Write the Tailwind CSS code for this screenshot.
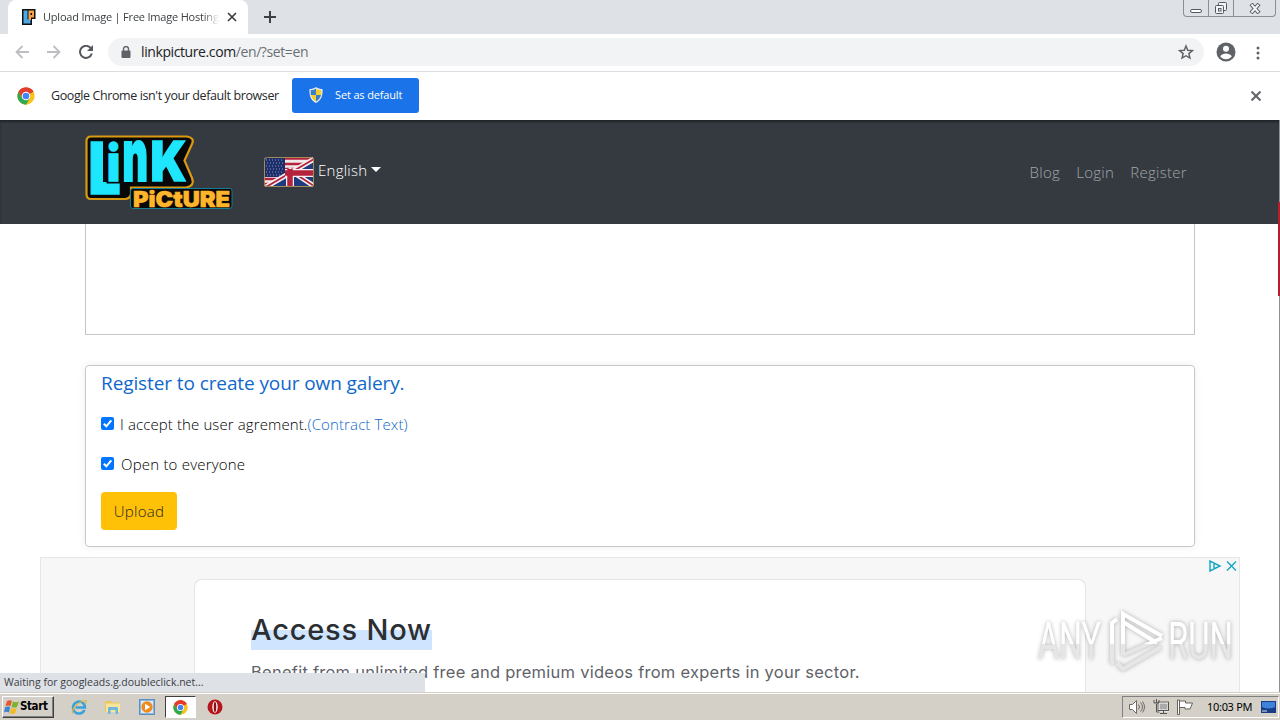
<!doctype html>
<html lang="en">
<head>
  <meta charset="UTF-8" />
  <meta name="viewport" content="width=device-width, initial-scale=1.0" />
  <title>Upload Image | Free Image Hosting</title>
  <script src="https://cdn.jsdelivr.net/npm/@tailwindcss/browser@4"></script>
</head>
<body class="relative flex h-[720px] w-[1280px] flex-col overflow-hidden bg-white font-['Open_Sans','Noto_Sans',sans-serif] text-black">

  <!-- Shared symbols -->
  <svg class="hidden">
    <symbol id="chrome" viewBox="0 0 48 48">
      <circle cx="24" cy="24" r="23" fill="#fbc116" />
      <path d="M24 24 4.1 12.5A23 23 0 0 1 43.9 12.5Z" fill="#e33b2e" />
      <path d="M4.1 12.5A23 23 0 0 0 24 47L34 29.8 14 29.8Z" fill="#2da94f" />
      <path d="M24 13H44.2A23 23 0 0 0 4.1 12.5L14 29.8Z" fill="#e33b2e" />
      <circle cx="24" cy="24" r="11.5" fill="#fff" />
      <circle cx="24" cy="24" r="8.8" fill="#4285f4" />
    </symbol>
  </svg>

  <!-- Tab strip -->
  <div class="flex h-[34px] shrink-0 bg-[#dee1e6]">
    <div class="ml-2 flex h-full w-[240px] items-center rounded-t-lg bg-white pl-3">
      <svg class="ml-px h-4 w-4" viewBox="0 0 16 16">
        <path d="M1 0H14.500V10H11V16H1Z" fill="#111" />
        <path d="M2.500 1.500H6.500V10.500H9.500V14.500H2.500Z" fill="#4aa8e8" />
        <path d="M7.500 1.500H13V8.500H10V11H7.500Z" fill="#f5a04a" />
        <path d="M9.500 4h1.500v2h-1.500z" fill="#111" />
      </svg>
      <div class="ml-[6px] w-[178px] overflow-hidden text-[11px] tracking-[-0.2px] whitespace-nowrap text-[#3c4043] [mask-image:linear-gradient(to_right,#000_160px,transparent_176px)]">Upload Image | Free Image Hosting |</div>
      <svg class="ml-[6px] h-[10px] w-[10px]" viewBox="0 0 10 10" stroke="#3c4043" stroke-width="1.700"><path d="M1 1l8 8M9 1l-8 8" /></svg>
    </div>
    <svg class="mt-[11px] ml-4 h-3 w-3" viewBox="0 0 12 12" stroke="#3c4043" stroke-width="2"><path d="M6 0v12M0 6h12" /></svg>
    <div class="mr-1 ml-auto flex h-[17px] rounded-b border border-t-0 border-[#8b8e94]">
      <div class="flex w-[25px] items-end justify-center border-r border-[#8b8e94] pb-[3px]"><div class="h-1 w-3 rounded-sm border border-[#55585e] bg-white"></div></div>
      <div class="flex w-[25px] items-center justify-center border-r border-[#8b8e94]">
        <svg class="h-3 w-3" viewBox="0 0 12 12" fill="#f2f3f5" stroke="#55585e"><rect x="3.500" y=".5" width="8" height="8" rx="1" /><rect x=".5" y="3.500" width="8" height="8" rx="1" /><rect x="3.500" y="6.500" width="2.500" height="2.500" /></svg>
      </div>
      <div class="flex w-[41px] items-center justify-center">
        <svg class="h-[11px] w-3" viewBox="0 0 12 11"><path d="M2 1l8 9M10 1l-8 9" stroke="#55585e" stroke-width="4" /><path d="M2.500 1.500l7 8M9.500 1.500l-7 8" stroke="#f2f3f5" stroke-width="2" /></svg>
      </div>
    </div>
  </div>

  <!-- Toolbar -->
  <div class="flex h-[38px] shrink-0 items-center border-b border-[#dadce0]">
    <svg class="mb-0.5 ml-[15px] h-[14px] w-[14px]" viewBox="0 0 14 14" fill="none" stroke="#bcbec1" stroke-width="1.800"><path d="M14 7H1.500M7.500 1l-6 6 6 6" /></svg>
    <svg class="mb-0.5 ml-[18px] h-[14px] w-[14px]" viewBox="0 0 14 14" fill="none" stroke="#bcbec1" stroke-width="1.800"><path d="M0 7h12.500M6.500 1l6 6-6 6" /></svg>
    <svg class="mb-0.5 ml-[18px] h-[14px] w-[14px]" viewBox="0 0 14 14"><path d="M12 3.500A6 6 0 1 0 12.800 8.500" fill="none" stroke="#55585d" stroke-width="2" /><path d="M14 0v6H8z" fill="#55585d" /></svg>
    <div class="mb-0.5 ml-[15px] flex h-7 w-[1096px] items-center rounded-full bg-[#f1f3f4] pl-[13px]">
      <svg class="h-3 w-[10px]" viewBox="0 0 10 12"><rect x="0.500" y="4.500" width="9" height="7.500" rx="1" fill="#5f6368" /><path d="M2.500 5V3a2.500 2.500 0 0 1 5 0v2" fill="none" stroke="#5f6368" stroke-width="1.400" /></svg>
      <div class="ml-[10px] text-[14px] leading-5 tracking-[-0.4px] whitespace-nowrap text-[#202124]">linkpicture.com<span class="text-[#6b6f74]">/en/?set=en</span></div>
      <svg class="mr-[10px] ml-auto h-4 w-4" viewBox="0 0 24 24" fill="none" stroke="#5f6368" stroke-width="2.200"><path d="M12 3l2.600 6.300 6.900.6-5.200 4.500 1.600 6.700L12 17.600l-5.900 3.500 1.600-6.700-5.200-4.500 6.900-.6z" /></svg>
    </div>
    <svg class="mb-0.5 ml-3 h-5 w-5" viewBox="0 0 20 20"><circle cx="10" cy="10" r="9.500" fill="#5f6368" /><circle cx="10" cy="6.800" r="3" fill="#fff" /><path d="M4.200 14.200C5.500 12.300 8 11.500 10 11.500s4.500.8 5.800 2.700C14.500 16 12.300 17.200 10 17.200S5.500 16 4.200 14.200z" fill="#fff" /></svg>
    <svg class="ml-5 h-[14px] w-1" viewBox="0 0 4 14" fill="#5f6368"><circle cx="2" cy="2" r="1.500" /><circle cx="2" cy="7" r="1.500" /><circle cx="2" cy="12" r="1.500" /></svg>
  </div>

  <!-- Default browser bar -->
  <div class="flex h-12 shrink-0 items-center pl-[17px]">
    <svg class="h-[18px] w-[18px]"><use href="#chrome" /></svg>
    <div class="ml-4 w-[241px] text-[12.500px] tracking-[-0.4px] whitespace-nowrap text-[#27292c]">Google Chrome isn't your default browser</div>
    <button class="mb-0.5 flex h-[35px] w-[127px] items-center rounded-[3px] bg-[#1a73e8] pl-[17px] text-[11px] tracking-[-0.15px] whitespace-nowrap text-white">
      <svg class="mr-3 h-4 w-[14px] shrink-0" viewBox="0 0 14 16">
        <path d="M7 0C5 1.500 3 2 0.500 2C0 9 2 13.500 7 16C12 13.500 14 9 13.500 2C11 2 9 1.500 7 0Z" fill="#e8eef5" />
        <path d="M7 1.500C5.500 2.600 4 3 1.700 3.100V8H7ZM7 8h5c-.6 3-2.200 5-5 6.600Z" fill="#3c7fc9" />
        <path d="M7 1.500C8.500 2.600 10 3 12.300 3.100V8H7ZM7 8H2c.6 3 2.200 5 5 6.600Z" fill="#f4ce2e" />
      </svg>
      Set as default
    </button>
    <svg class="mr-[19px] ml-auto h-[10px] w-[10px]" viewBox="0 0 10 10" stroke="#5f6368" stroke-width="2"><path d="M.5 .5l9 9M9.500 .5l-9 9" /></svg>
  </div>

  <!-- Web page -->
  <main class="relative flex h-[572px] shrink-0 flex-col overflow-hidden">
    <nav class="flex h-[104px] shrink-0 bg-[#343a40] pl-20 shadow-[inset_0_2px_2px_#212529]">
      <svg class="mt-[10px] h-[85px] w-[160px] shrink-0 overflow-visible" viewBox="0 0 160 85" font-family="Inter, sans-serif" font-weight="900">
        <path d="M11 6.500H107Q115 8 112 14L104.500 30.500 112 48Q115 56 106 57.500H51V64Q50 69 45 69H11Q6.500 69 6.500 64V11Q6.500 6.500 11 6.500Z" fill="#080808" stroke="#d99a12" stroke-width="2.200" />
        <g fill="#1ee6fc" stroke="#1ee6fc" stroke-width="1.500">
          <text transform="translate(8.500 64) scale(.8 1)" font-size="71">L</text>
          <rect x="26.500" y="8" width="16" height="45.500" fill="#080808" stroke="none" />
          <text transform="translate(27 51) scale(.88 1)" font-size="50">i</text>
          <text transform="translate(42.500 51) scale(.74 1.350)" font-size="53">n</text>
          <text transform="translate(70.500 51) scale(.86 1)" font-size="55">K</text>
        </g>
        <path d="M53 58.500H150Q152 58.500 152 61V76Q152 78.500 149 78.500H53Q50.500 78.500 50.500 76V61Q50.500 58.500 53 58.500Z" fill="#080808" stroke="#147c94" />
        <text x="53" y="76.500" font-size="22" textLength="97" lengthAdjust="spacingAndGlyphs" fill="#ffb52b" stroke="#ffb52b" stroke-width=".6">PiCtURE</text>
      </svg>
      <svg class="mt-[37px] ml-6 h-[30px] w-[50px] shrink-0" viewBox="0 0 50 30">
        <clipPath id="flag"><rect width="50" height="30" rx="3" /></clipPath>
        <g clip-path="url(#flag)">
          <rect width="50" height="30" fill="#f0e9e9" />
          <path d="M20 1.500h30M20 7h20M20 12h10M0 22h22M0 27h12" stroke="#b5223c" stroke-width="2.600" />
          <rect width="21" height="20" fill="#1d2f6b" />
          <path d="M2 3h18M3 6h17M2 9h18M3 12h17M2 15h18M3 18h17" stroke="#8f9cc4" stroke-width="1" stroke-dasharray="1 2" />
          <path d="M50 0v30H4L21 20V13H34Z" fill="#203a80" />
          <path d="M50 2L2 30M24 12l26 17" stroke="#f5f0f0" stroke-width="5" />
          <path d="M50 2L2 30M24 12l26 17" stroke="#b5223c" stroke-width="1.800" />
          <path d="M26 12v18M21 16h29" stroke="#f5f0f0" stroke-width="8" />
          <path d="M26 12v18M21 16h29" stroke="#b5223c" stroke-width="5.500" />
        </g>
        <rect x=".5" y=".5" width="49" height="29" rx="3" fill="none" stroke="#a58b55" />
      </svg>
      <div class="mt-[38px] ml-1 flex h-6 items-center text-[15px] font-light tracking-[0.25px] whitespace-nowrap text-white">English<span class="mb-0.5 ml-1 border-x-[5px] border-t-[5px] border-x-transparent border-t-white"></span></div>
      <div class="mt-10 mr-[93px] ml-auto flex h-6 items-center gap-4 text-[15px] font-light tracking-[0.3px] text-[#a3a6a9]">
        <a>Blog</a>
        <a>Login</a>
        <a>Register</a>
      </div>
    </nav>

    <div class="mx-[85px] h-[111px] shrink-0 border border-t-0 border-[#c3c5c7]"></div>

    <section class="mx-[85px] mt-[30px] h-[182px] shrink-0 rounded border border-[#c6c7c9] pl-[15px] shadow-[0_0_8px_rgba(0,0,0,0.07)]">
      <h2 class="mt-[5px] text-[19px] leading-6 tracking-[-0.1px] whitespace-nowrap text-[#1068cb]">Register to create your own galery.</h2>
      <div class="mt-[17px] flex h-6 items-center text-[15px] font-light tracking-[0.11px] whitespace-nowrap">
        <svg class="mr-[6px] mb-px h-[13px] w-[13px]" viewBox="0 0 13 13"><rect width="13" height="13" rx="2" fill="#0075ff" /><path d="M2.800 6.800l2.500 2.500 5-6" fill="none" stroke="#fff" stroke-width="2" /></svg>
        <span>I accept the user agrement.</span><a class="text-[#1068cb]">(Contract Text)</a>
      </div>
      <div class="mt-4 flex h-6 items-center text-[15px] font-light tracking-[0.2px] whitespace-nowrap">
        <svg class="mr-[7px] mb-px h-[13px] w-[13px]" viewBox="0 0 13 13"><rect width="13" height="13" rx="2" fill="#0075ff" /><path d="M2.800 6.800l2.500 2.500 5-6" fill="none" stroke="#fff" stroke-width="2" /></svg>
        <span>Open to everyone</span>
      </div>
      <button class="mt-4 h-[38px] w-[76px] rounded bg-[#ffc107] text-[15px] font-light tracking-[0.3px] text-[#212529]">Upload</button>
    </section>

    <!-- Ad -->
    <section class="relative mx-10 mt-[10px] h-[135px] shrink-0 border border-b-0 border-[#e6e6e6] bg-[#f7f7f7] pt-[21px]">
      <div class="ml-[153px] h-[113px] w-[892px] rounded-t-lg border border-b-0 border-[#e4e4e4] bg-white pt-[30px] pl-14 font-['Inter',sans-serif]">
        <h1 class="w-fit bg-[linear-gradient(transparent_50%,#cfe4ff_50%)] text-[29px] leading-10 font-medium tracking-[0.8px] whitespace-nowrap text-[#2b2f33]">Access Now</h1>
        <p class="mt-[10px] text-[16.500px] leading-6 tracking-[0.25px] whitespace-nowrap text-[#5f6368]">Benefit from unlimited free and premium videos from experts in your sector.</p>
      </div>
      <svg class="absolute top-[2px] right-[2px] h-3 w-7" viewBox="0 0 28 12" fill="none" stroke="#12a5c4" stroke-width="1.400"><path d="M1 1v10l10-5zM5 4v4M18 1.500l9 9M27 1.500l-9 9" /></svg>
    </section>

    <!-- Watermark -->
    <svg class="absolute top-[486px] left-[1034px] h-[70px] w-[204px] overflow-visible drop-shadow-[0_0_2px_rgba(0,0,0,0.3)]" viewBox="0 0 204 70" font-family="Roboto, sans-serif" font-size="51">
      <defs><linearGradient id="fade" x1="0" y1="0" x2="0" y2="1"><stop offset=".55" stop-color="#fff" /><stop offset=".55" stop-color="#e6e6e6" /></linearGradient></defs>
      <text x="4" y="53" textLength="63" lengthAdjust="spacingAndGlyphs" fill="url(#fade)">ANY</text>
      <text x="134" y="53" textLength="65" lengthAdjust="spacingAndGlyphs" fill="url(#fade)">RUN</text>
      <path d="M78 58V17l5-4M89 49V8l39 22M89 49l39-17M83 57l6 6 38-22M89 16l34 21" fill="none" stroke="url(#fade)" stroke-width="4" />
    </svg>

    <!-- Page edge and loading status -->
    <div class="absolute top-0 right-0 h-full w-px bg-[#8d9194]"></div>
    <div class="absolute top-[82px] right-0 h-[94px] w-[2px] bg-[#b3202b]"></div>
    <div class="absolute bottom-0 left-0 flex h-[19px] w-[425px] items-center bg-[#dee1e6] pt-px pl-1 text-[10.500px] whitespace-nowrap text-[#3c4043]">Waiting for googleads.g.doubleclick.net...</div>
  </main>

  <!-- Taskbar -->
  <footer class="flex h-7 shrink-0 items-center border-t border-[#d4d0c8] bg-[#d4d0c8] pt-px pl-0.5 shadow-[inset_0_1px_0_#fff]">
    <button class="flex h-[22px] w-[52px] items-center border border-t-white border-r-[#404040] border-b-[#404040] border-l-white pl-px font-['DejaVu_Sans_Condensed','DejaVu_Sans',sans-serif] text-[11.500px] font-bold tracking-[-0.4px] shadow-[inset_-1px_-1px_0_#808080]">
      <svg class="mr-px h-[14px] w-[15px] shrink-0" viewBox="0 0 15 14"><path d="M3 1q3-1.500 5 0L6.500 6Q4 5 1.500 6Z" fill="#e4592d" /><path d="M9 1.500q3 1.500 6 0L13 7q-2.500 1-5.500 0Z" fill="#79b52c" /><path d="M1.200 7q3-1.200 5 0L5 12.500Q2.500 11 0 12.500Z" fill="#3b85cf" /><path d="M7.200 8q3 1.200 5.500 0L11 13.500q-3 1-5.200-.5Z" fill="#f5b921" /></svg>
      Start
    </button>
    <svg class="ml-[17px] h-4 w-4" viewBox="0 0 16 16" fill="none"><path d="M13.500 11A6 6 0 1 1 14 8.500H4.500" stroke="#38a2dc" stroke-width="2.500" /><path d="M2 14.500C-1 12 7 2 15 1.500q1 1-.5 3" stroke="#e3b53b" stroke-width="1.200" /></svg>
    <svg class="ml-[18px] h-4 w-4" viewBox="0 0 16 16"><path d="M0 2h6l1 1.500h8V13H0Z" fill="#ecc85c" /><path d="M1 4.500h14V13H1Z" fill="#f8e59a" /><path d="M3 15V9q0-1 1-1h8q1 0 1 1v6h-2.500v-4h-5v4Z" fill="#6db8dc" /></svg>
    <svg class="ml-[18px] h-4 w-4" viewBox="0 0 16 16"><rect x=".5" y=".5" width="15" height="15" fill="#8cb8e0" stroke="#5a8fc4" /><rect x="2" y="2" width="12" height="12" fill="#dcecf8" /><circle cx="8" cy="8" r="5.700" fill="#f08a1c" /><path d="M6 4.700v6.600L11.300 8Z" fill="#fff" /></svg>
    <div class="ml-[10px] flex h-[22px] w-[31px] items-center justify-center border border-t-[#404040] border-r-white border-b-white border-l-[#404040] bg-white"><svg class="h-[15px] w-[15px]"><use href="#chrome" /></svg></div>
    <svg class="ml-[11px] h-4 w-4" viewBox="0 0 16 16"><circle cx="8" cy="8" r="7.500" fill="#b5151b" /><ellipse cx="8" cy="8" rx="2.700" ry="5.800" fill="#fff" /><ellipse cx="8" cy="8" rx="1.300" ry="5" fill="#8d1014" /></svg>

    <div class="mr-px ml-auto flex h-[22px] w-[157px] items-center border border-t-[#808080] border-r-white border-b-white border-l-[#808080] pl-[6px]">
      <svg class="h-[14px] w-4" viewBox="0 0 16 14" fill="none" stroke="#6c6a66"><path d="M.5 4.500h3l4-4v13l-4-4h-3z" fill="#fff" /><path d="M9.500 4.500q2 2.500 0 5M11.500 2.500q4 4.500 0 9M13.500 1.500q4 5.500 0 11" /></svg>
      <svg class="ml-2 h-4 w-4" viewBox="0 0 16 16" fill="none" stroke="#55534f"><rect x="5.500" y="3.500" width="10" height="8" fill="#aaa" stroke="#fff" stroke-width="2" /><rect x="5" y="3" width="10.500" height="8.500" /><path d="M7 14.500h7M10.500 12v2M1 1v3h5V1M3.500 0v4M3.500 5v8h3" /></svg>
      <svg class="ml-2 h-4 w-4" viewBox="0 0 16 16" fill="#fff" stroke="#66635f"><path d="M.5 1h2v14.500h-2zM2.500 2h6v2h7l-2.500 6h-5v-1.500h-5.500z" /></svg>
      <div class="ml-[14px] w-[47px] font-['Noto_Sans',sans-serif] text-[11px] tracking-[-0.3px] whitespace-nowrap">10:03 PM</div>
      <svg class="ml-[7px] h-3 w-[15px]" viewBox="0 0 15 12"><rect width="15" height="12" fill="#173d85" /><path d="M1 1h13v5Q8 9 1 6Z" fill="#3f82dc" /><path d="M1 10h5" stroke="#d9e7f7" /></svg>
    </div>
  </footer>
</body>
</html>
